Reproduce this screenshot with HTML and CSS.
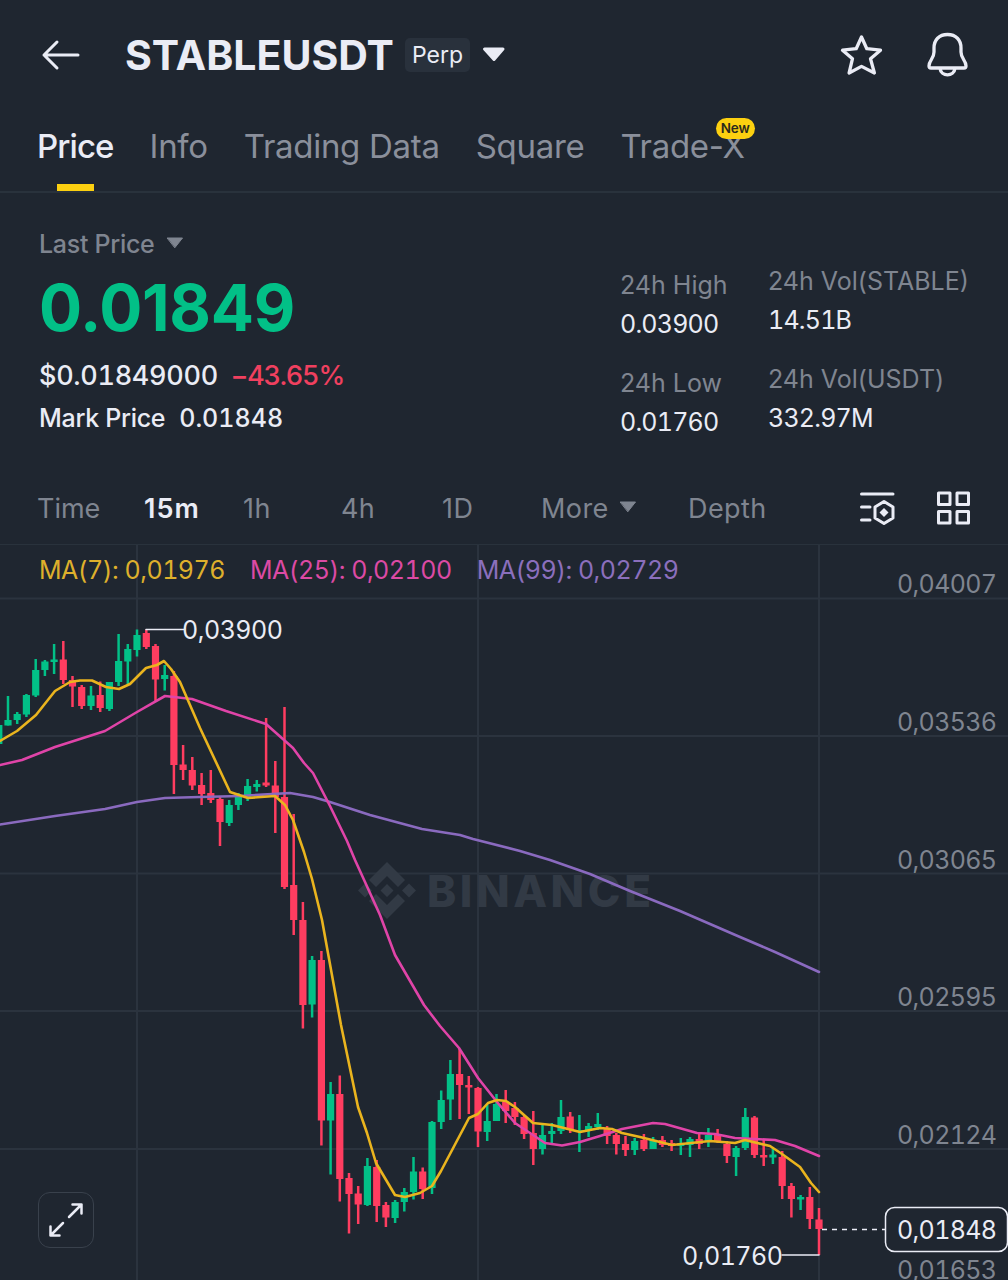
FILE: index.html
```
<!doctype html>
<html lang="en">
<head>
<meta charset="utf-8">
<title>STABLEUSDT Perp</title>
<link rel="stylesheet" href="styles.css">
</head>
<body>
<div class="topbar">
	<svg class="back" width="40" height="32" viewBox="0 0 40 32"><path d="M16 3L3 16L16 29M3 16H37"/></svg>
	<h1>STABLEUSDT</h1>
	<span class="tag">Perp</span>
	<svg class="caret" width="24" height="16" viewBox="0 0 24 16"><path d="M2.500 2H21L12 12.500Z"/></svg>
	<div class="actions">
		<svg width="44" height="44" viewBox="0 0 44 44"><path d="M21.500 4L26.800 15.700L40.500 17.200L30.500 25.700L34.400 40L21.500 33.400L9.100 40L12.500 25.700L2.500 17.200L16.200 15.700Z"/></svg>
		<svg width="44" height="48" viewBox="0 0 44 48"><path d="M21.500 3.500C13 3.500 8 9 8 17V21C8 28 3 29 3 35C3 36.500 3.700 37 5 37H38C39.300 37 40 36.500 40 35C40 29 35 28 35 21V17C35 9 30 3.500 21.500 3.500ZM14 37.500C15 46 28 46 29 37.500"/></svg>
	</div>
</div>
<div class="tabs">
	<span class="active">Price</span>
	<span>Info</span>
	<span>Trading Data</span>
	<span>Square</span>
	<span>Trade-X<b class="badge">New</b></span>
</div>
<div class="ticker">
	<div class="price">
		<p class="label">Last Price <svg width="18" height="12" viewBox="0 0 18 12"><path d="M1.500 1H16.500L9 10.500Z"/></svg></p>
		<p class="last">0.01849</p>
		<p class="usd">$0.01849000 <span class="down">&minus;43.65%</span></p>
		<p class="mark">Mark Price <span>0.01848</span></p>
	</div>
	<dl class="range">
		<dt>24h High</dt>
		<dd>0.03900</dd>
		<dt>24h Low</dt>
		<dd>0.01760</dd>
	</dl>
	<dl class="volume">
		<dt>24h Vol(STABLE)</dt>
		<dd>14.51B</dd>
		<dt>24h Vol(USDT)</dt>
		<dd>332.97M</dd>
	</dl>
</div>
<div class="intervals">
	<span>Time</span>
	<span class="active">15m</span>
	<span>1h</span>
	<span>4h</span>
	<span>1D</span>
	<span>More <svg width="18" height="12" viewBox="0 0 18 12"><path d="M1.500 1H16.500L9 10.500Z"/></svg></span>
	<span>Depth</span>
	<svg class="tool" width="36" height="34" viewBox="0 0 36 34"><path d="M1.500 3H33M1.500 16H10M1.500 29H10M24 10.500L33 16V27L24 32.500L15 27V16Z"/><path class="fill" d="M24 17L28.500 21.500L24 26L19.500 21.500Z"/></svg>
	<svg class="tool" width="36" height="34" viewBox="0 0 36 34"><path d="M2.500 2H14V13.500H2.500ZM21 2H32.500V13.500H21ZM2.500 20.500H14V32H2.500ZM21 20.500H32.500V32H21Z"/></svg>
</div>
<div class="chart">
	<svg id="plot" width="1008" height="735" viewBox="0 545 1008 735">
		<g class="grid">
			<path d="M0 598.500H1008M0 736H1008M0 873.500H1008M0 1011H1008M0 1149H1008"/>
			<path d="M137 545V1280M478 545V1280M819 545V1280"/>
		</g>
		<g class="watermark">
			<path d="M387 862L405 880L398 887L387 876L376 887L369 880ZM387 919L369 901L376 894L387 905L398 894L405 901ZM387 884L393.500 890.500L387 897L380.500 890.500ZM365 883.500L372 890.500L365 897.500L358 890.500ZM409 883.500L416 890.500L409 897.500L402 890.500Z"/>
			<text x="427" y="907" textLength="224">BINANCE</text>
		</g>
		<g id="candles"></g>
		<g id="averages"></g>
		<g class="marks">
			<path d="M146 629.500H184M782 1255H819"/>
			<path class="dash" d="M822 1229.500H885"/>
			<text x="182" y="639" textLength="101">0,03900</text>
			<text x="682" y="1265" textLength="101">0,01760</text>
		</g>
		<g class="axis">
			<text x="897" y="593" textLength="100">0,04007</text>
			<text x="897" y="731" textLength="100">0,03536</text>
			<text x="897" y="869" textLength="100">0,03065</text>
			<text x="897" y="1006" textLength="100">0,02595</text>
			<text x="897" y="1144" textLength="100">0,02124</text>
			<text x="897" y="1279" textLength="100">0,01653</text>
		</g>
		<g class="current">
			<rect x="885.500" y="1207.500" width="122" height="44" rx="9"/>
			<text x="897" y="1239" textLength="100">0,01848</text>
		</g>
	</svg>
	<div class="legend">
		<span class="ma7">MA(7): 0,01976</span>
		<span class="ma25">MA(25): 0,02100</span>
		<span class="ma99">MA(99): 0,02729</span>
	</div>
	<div class="expand">
		<svg width="36" height="36" viewBox="0 0 36 36"><path d="M21 15L33.500 2.500M24.500 2.500H33.500V11.500M15 21L2.500 33.500M2.500 24.500V33.500H11.500"/></svg>
	</div>
</div>
<script src="script.js"></script>
</body>
</html>
```
FILE: styles.css
```
html, body {
	margin: 0;
	height: 1280px;
	overflow: hidden;
	background: #1f2630;
	color: #eaecf5;
	font-family: Inter, Roboto, sans-serif;
	font-size: 25px;
}
p, h1, dl, dd {
	margin: 0;
}
svg {
	display: block;
	flex: none;
	fill: none;
	stroke: #eaecf5;
	stroke-width: 3;
	stroke-linecap: round;
	stroke-linejoin: round;
}
.topbar {
	display: flex;
	align-items: center;
	height: 110px;
	padding: 0 38px 0 41px;
}
h1 {
	margin-left: 44px;
	font-size: 41px;
	font-weight: 700;
}
.tag {
	margin-left: 11px;
	padding: 0 7px;
	border-radius: 5px;
	background: #29313c;
	font-size: 23px;
	line-height: 34px;
}
.caret {
	margin-left: 12px;
	fill: #eaecf5;
}
.actions {
	display: flex;
	align-items: center;
	gap: 42px;
	margin-left: auto;
}
.actions svg {
	stroke-width: 3.3;
}
.tabs {
	display: flex;
	gap: 36px;
	height: 81px;
	padding-left: 37px;
	border-bottom: 2px solid #29323c;
	color: #8a8f9b;
	font-size: 33px;
	line-height: 72px;
	letter-spacing: -0.3px;
}
.tabs span {
	position: relative;
}
.tabs .active {
	color: #eaecf5;
	font-weight: 500;
	letter-spacing: -0.9px;
}
.tabs .active::after {
	content: "";
	position: absolute;
	left: 20px;
	bottom: 0;
	width: 37px;
	height: 7px;
	background: #fcd010;
}
.tabs .badge {
	position: absolute;
	top: 8px;
	right: -10px;
	padding: 0 5px;
	border-radius: 11px;
	background: #fcd010;
	color: #2b2a1c;
	font-size: 13.5px;
	font-weight: 600;
	line-height: 21px;
	letter-spacing: -0.1px;
}
.ticker {
	display: grid;
	grid-template-columns: 581px 148px 1fr;
	height: 279px;
	padding-left: 39px;
}
.price {
	padding-top: 34px;
}
.label, .usd, .mark {
	display: flex;
	align-items: center;
}
.label {
	height: 34px;
	gap: 12px;
	color: #7f8590;
	font-weight: 500;
	letter-spacing: -0.3px;
}
.label svg, .intervals span svg {
	margin-bottom: 3px;
	fill: #7f8590;
	stroke: #7f8590;
	stroke-width: 1;
}
.last {
	height: 93px;
	color: #02c087;
	font-size: 64px;
	font-weight: 700;
	line-height: 94px;
	letter-spacing: -0.3px;
}
.usd, .mark, dd, .legend, text {
	font-variant-numeric: tabular-nums;
}
.usd {
	height: 42px;
	gap: 13px;
	font-size: 27px;
	font-weight: 500;
	letter-spacing: -0.3px;
}
.down {
	color: #f0405f;
	letter-spacing: -1.2px;
}
.mark {
	height: 44px;
	gap: 14px;
	font-weight: 500;
	letter-spacing: -0.3px;
}
.mark span {
	letter-spacing: 0;
}
dt {
	height: 38px;
	color: #7f8590;
	line-height: 38px;
}
dd {
	height: 40px;
	margin-bottom: 20px;
	line-height: 40px;
	letter-spacing: -0.8px;
}
.range {
	padding-top: 73px;
}
.volume {
	padding-top: 69px;
}
.intervals {
	display: grid;
	grid-template-columns: 107px 99px 98px 101px 99px 147px 172px 76px 36px;
	align-items: center;
	height: 72px;
	padding-left: 37px;
	border-bottom: 1px solid #29323c;
	color: #7f8590;
	font-size: 27px;
	letter-spacing: 0.4px;
}
.intervals span {
	display: flex;
	align-items: center;
	gap: 10px;
}
.intervals span:first-child {
	letter-spacing: 0;
}
.intervals .active {
	color: #eaecf5;
	font-weight: 600;
	letter-spacing: 1px;
}
.tool .fill {
	fill: #eaecf5;
	stroke: none;
}
.chart {
	position: relative;
	height: 735px;
}
.legend {
	position: absolute;
	top: 9px;
	left: 39px;
	display: flex;
	gap: 25px;
	line-height: 32px;
	letter-spacing: -0.5px;
}
.ma7 { color: #deb02c; stroke: #eab41e; }
.ma25 { color: #dc4aa4; stroke: #e044a8; }
.ma99 { color: #8b6fbd; stroke: #8a6abf; }
.grid {
	stroke: #2b333e;
	stroke-width: 2;
}
text {
	fill: #eaecf5;
	stroke: none;
}
.watermark {
	fill: #323a45;
	stroke: none;
}
.watermark text {
	fill: #323a45;
	font-size: 44px;
	font-weight: 800;
}
.up { fill: #02c087; stroke: #02c087; }
.fall { fill: #ff3d60; stroke: #ff3d60; }
#candles {
	stroke-linecap: butt;
	stroke-linejoin: miter;
}
#candles rect {
	stroke: none;
}
#candles path {
	stroke-width: 2.5;
}
#averages polyline {
	fill: none;
	stroke-width: 2.6;
}
.marks path {
	stroke-width: 1.5;
}
.marks .dash {
	stroke-dasharray: 5 5;
	stroke-linecap: butt;
}
.axis text {
	fill: #7f8590;
}
.current rect {
	fill: #1f2630;
	stroke-width: 1.5;
}
.expand {
	position: absolute;
	left: 38px;
	top: 647px;
	display: flex;
	align-items: center;
	justify-content: center;
	width: 54px;
	height: 54px;
	border: 1px solid #39414c;
	border-radius: 12px;
	background: #1f2630;
}
.expand svg {
	stroke-width: 2.5;
}
```
FILE: script.js
```
// [high, body top, body bottom, low, rising]
var candles = [
	[725,725,744,744,1], [696,720,725.5,725.5,1], [712,714,720,724,1], [694,695,714.5,717,1],
	[659,670,695.5,697,1], [660,661.5,670,676,1], [644,659.5,662,674,1], [641,659.5,680,684,0],
	[676,680,686.5,707,0], [685,687,706,709,0], [686,695.5,706,710,1], [681.5,695,708,712,0],
	[682,682,709,711,1], [634,661,682,686,1], [644,649,661.5,684,1], [629.5,635,650,656.5,1],
	[629.5,633,647,649,0], [644,646,679.5,702,0], [665,675,679,690.5,1], [671,676,765,794,0],
	[745,764.5,770,780,0], [757,770,785.5,790,0], [773,785,794,805,0], [770,793,800,803,0],
	[797,799,822,846,0], [800,805,823,826,1], [793,797,805,810,1], [779,786,797,801,1],
	[780,784,787,791.5,1], [718,782.5,785.5,787,0], [761,785.5,797,833,0], [707,797,887,889,0],
	[814,885,920,935,0], [902,920,1005,1028.5,0], [956,960,1004.5,1017.5,1], [951,960,1120.5,1145.5,0],
	[1082,1094,1120.5,1174.5,1], [1075.5,1094,1179,1201.5,0], [1173,1178,1194,1233.5,0], [1186,1193.5,1204.5,1224,0],
	[1158,1166,1205,1206,1], [1160,1167,1206,1222,0], [1202,1205,1217.5,1227,0], [1200,1202,1218,1223,1],
	[1188,1192,1202,1211.5,1], [1157,1171.5,1192,1199.5,1], [1167.5,1171.5,1189,1199,0], [1121,1122,1188,1194,1],
	[1090.5,1100,1122,1129,1], [1060,1074,1099.5,1120,1], [1049,1074,1085,1119,0], [1076,1085,1087.5,1114,0],
	[1087,1088,1131.5,1147,0], [1104,1121,1132,1141,1], [1094,1104,1121,1121,1], [1090,1102,1111,1123,0],
	[1102,1108,1117,1125,0], [1115,1117,1134,1139,0], [1111,1133,1149,1165,0], [1124,1135,1149,1154.5,1],
	[1123,1131,1134,1145,1], [1100,1117,1131,1134,1], [1112,1116.5,1130,1133,0], [1115,1130,1132,1152,1],
	[1123,1126,1130,1137,1], [1113,1124,1127,1130,1], [1126,1128,1136,1144,0], [1133,1135,1144,1154.5,0],
	[1136,1144,1150,1156,0], [1138,1141,1150,1155,1], [1134,1140,1149,1151,0], [1137,1140,1149,1149,1],
	[1136,1140,1145,1147,0], [1140,1143,1146,1151,0], [1138,1143,1146,1155,1], [1137,1139,1145,1157,1],
	[1134,1139,1144,1149,0], [1128,1135,1141,1147,1], [1129,1134,1142,1143,0], [1141,1144,1156,1163,0],
	[1146,1148,1157,1176,1], [1108,1117,1148,1150,1], [1116,1117.5,1155,1158,0], [1140,1155,1157.5,1166,0],
	[1148,1154.5,1157.5,1164,1], [1151,1157,1186,1199,0], [1183,1186,1199,1217.5,0], [1195,1197,1199.5,1210,1],
	[1187,1197,1219,1229,0], [1208,1219.5,1229,1255,0]
];
var averages = {
	ma99: "0,824.5 55,816 105,809 137,802 165,798 200,797 240,796 290,793 313,797 330,802 370,815 422,829 460,835 473,839 520,851 550,860 590,874 630,891 680,911 740,937 775,952 819,972",
	ma25: "0,765 22,760 55,747 105,731 137,712 165,696 192,699 226,711 266,724 275,732 293,748 304,763 313,773 330,806 347,841 355,860 380,915 395,955 424,1005 440,1026 459,1048 478,1078 497,1102 515,1123 533,1135 545,1143 562,1145.5 580,1142 600,1136 622,1129 653,1123 665,1124 697,1133 715,1134 735,1138 775,1140 795,1146 819,1156",
	ma7: "0,741 17,731 36,715 55,691 70,682 80,680.5 92,680.5 106,687 119,689 130,684 146,668 157,665 164,661 171,669 180,682 200,728 230,792 248,798 275,796 285,805 293,820 304,852 312,879 322,920 341,1025 358,1107 367,1133 376,1163 395,1195 405,1197 420,1193 432,1186 441,1171 469,1118 478,1114 488,1103 497,1100 506,1101 515,1107 533,1123 552,1125 580,1132 600,1128 612,1129 622,1133 640,1137 672,1145 710,1141 735,1143 745,1140 770,1146 782,1154 800,1167 811,1183 819,1192"
};

var step = 9.216, html = "";
for (var i = 0; i < candles.length; i++) {
	var c = candles[i], x = -1.2 + i * step;
	html += '<g class="' + (c[4] ? "up" : "fall") + '">' +
		'<path d="M' + x.toFixed(1) + ' ' + c[0] + 'V' + c[3] + '"/>' +
		'<rect x="' + (x - 3.6).toFixed(1) + '" y="' + c[1] + '" width="7.2" height="' + (c[2] - c[1]) + '"/></g>';
}
document.getElementById("candles").innerHTML = html;

html = "";
for (var name in averages) {
	html += '<polyline class="' + name + '" points="' + averages[name] + '"/>';
}
document.getElementById("averages").innerHTML = html;
```
